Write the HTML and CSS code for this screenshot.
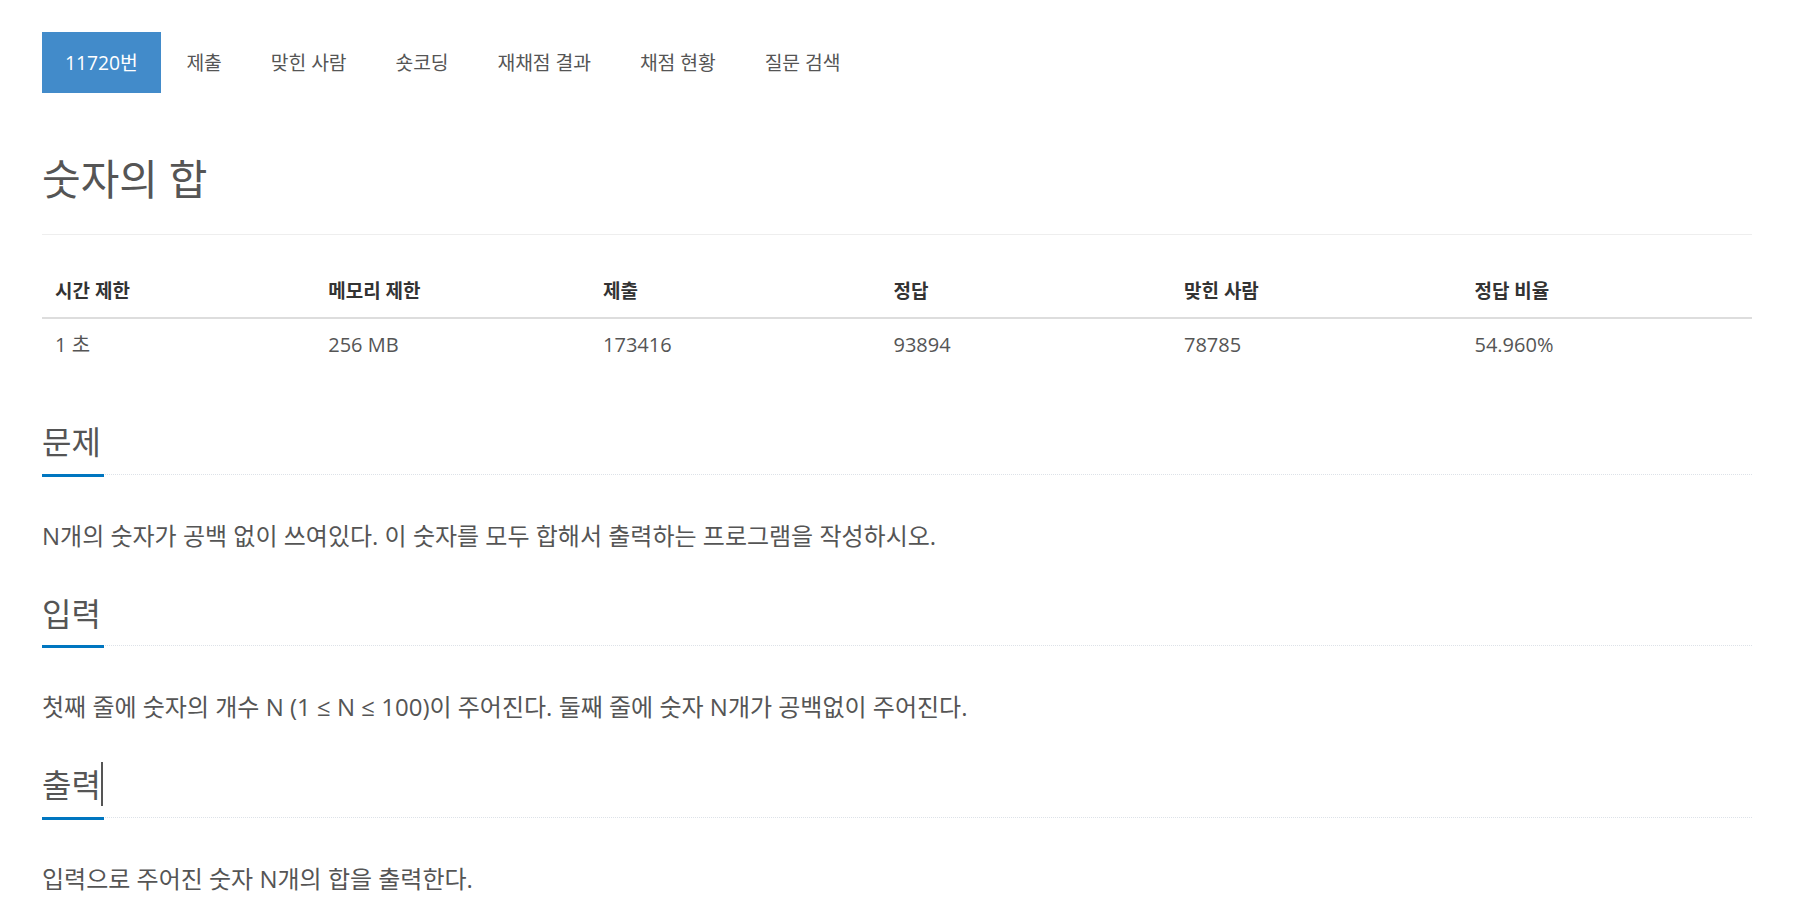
FILE: index.html
```html
<!DOCTYPE html>
<html lang="ko">
<head>
  <meta charset="UTF-8">
  <meta name="viewport" content="width=device-width, initial-scale=1.0">
  <title>11720번: 숫자의 합</title>
  <link rel="stylesheet" href="styles.css">
</head>
<body>
  <div class="container">
    <ul class="problem-menu">
      <li class="active"><a href="#">11720번</a></li>
      <li><a href="#">제출</a></li>
      <li><a href="#">맞힌 사람</a></li>
      <li><a href="#">숏코딩</a></li>
      <li><a href="#">재채점 결과</a></li>
      <li><a href="#">채점 현황</a></li>
      <li><a href="#">질문 검색</a></li>
    </ul>

    <div class="page-header">
      <h1 id="problem_title">숫자의 합</h1>
    </div>

    <table id="problem-info" class="problem-info">
      <thead>
        <tr>
          <th class="col-time">시간 제한</th>
          <th class="col-memory">메모리 제한</th>
          <th>제출</th>
          <th>정답</th>
          <th>맞힌 사람</th>
          <th>정답 비율</th>
        </tr>
      </thead>
      <tbody>
        <tr>
          <td>1 초</td>
          <td>256 MB</td>
          <td>173416</td>
          <td>93894</td>
          <td>78785</td>
          <td>54.960%</td>
        </tr>
      </tbody>
    </table>

    <section id="description" class="problem-section">
      <div class="headline">
        <h2>문제</h2>
      </div>
      <div class="problem-text">
        <p>N개의 숫자가 공백 없이 쓰여있다. 이 숫자를 모두 합해서 출력하는 프로그램을 작성하시오.</p>
      </div>
    </section>

    <section id="input" class="problem-section">
      <div class="headline">
        <h2>입력</h2>
      </div>
      <div class="problem-text">
        <p>첫째 줄에 숫자의 개수 N (1 ≤ N ≤ 100)이 주어진다. 둘째 줄에 숫자 N개가 공백없이 주어진다.</p>
      </div>
    </section>

    <section id="output" class="problem-section">
      <div class="headline">
        <h2>출력<span class="caret"></span></h2>
      </div>
      <div class="problem-text">
        <p>입력으로 주어진 숫자 N개의 합을 출력한다.</p>
      </div>
    </section>
  </div>
</body>
</html>
```

FILE: styles.css
```css
body {
  margin: 0;
  padding: 0;
  font-family: "Open Sans", "Noto Sans CJK KR", sans-serif;
  color: #555;
  background: #fff;
}

.container {
  padding: 0 44px 40px 42px;
}

/* 상단 문제 메뉴 */
.problem-menu {
  display: flex;
  list-style: none;
  margin: 32px 0 0;
  padding: 0;
}

.problem-menu a {
  display: block;
  padding: 20px 24.4px;
  font-size: 19.3px;
  line-height: 21px;
  color: #555;
  text-decoration: none;
}

.problem-menu .active a {
  padding: 20px 23px;
  background-color: #428bca;
  color: #fff;
}

.problem-menu .active + li a {
  padding-left: 25.5px;
}

/* 제목 */
.page-header {
  margin-top: 63px;
  padding-bottom: 32px;
  border-bottom: 1px solid #eee;
}

.page-header h1 {
  margin: 0;
  font-size: 42px;
  line-height: 46px;
  font-weight: 400;
  color: #555;
}

/* 문제 정보 표 */
.problem-info {
  width: 100%;
  table-layout: fixed;
  border-collapse: collapse;
  margin: 36px 0 54px;
}

.problem-info th,
.problem-info td {
  text-align: left;
  padding: 13px 13px;
  line-height: 25px;
}

.problem-info th {
  width: 17%;
  padding-top: 8px;
  font-size: 19px;
  font-weight: 700;
  color: #333;
  border-bottom: 2px solid #ddd;
}

.problem-info th.col-time {
  width: 15.9%;
}

.problem-info th.col-memory {
  width: 16%;
}

.problem-info td {
  font-size: 20px;
  color: #555;
}

/* 문제 본문 */
.problem-section {
  margin-top: 45px;
}

.headline {
  display: flex;
  border-bottom: 1px dotted #dde2e8;
}

.headline h2 {
  position: relative;
  margin: 0 0 -3px;
  padding: 0 3px 14.5px 0;
  font-size: 32px;
  line-height: 35px;
  font-weight: 400;
  color: #555;
  border-bottom: 3px solid #0076c0;
}

.caret {
  position: absolute;
  left: 59px;
  top: -5px;
  width: 2px;
  height: 44px;
  background: #555;
}

.problem-text p {
  margin: 46px 0 0;
  font-size: 24px;
  line-height: 30px;
  color: #555;
}
```
